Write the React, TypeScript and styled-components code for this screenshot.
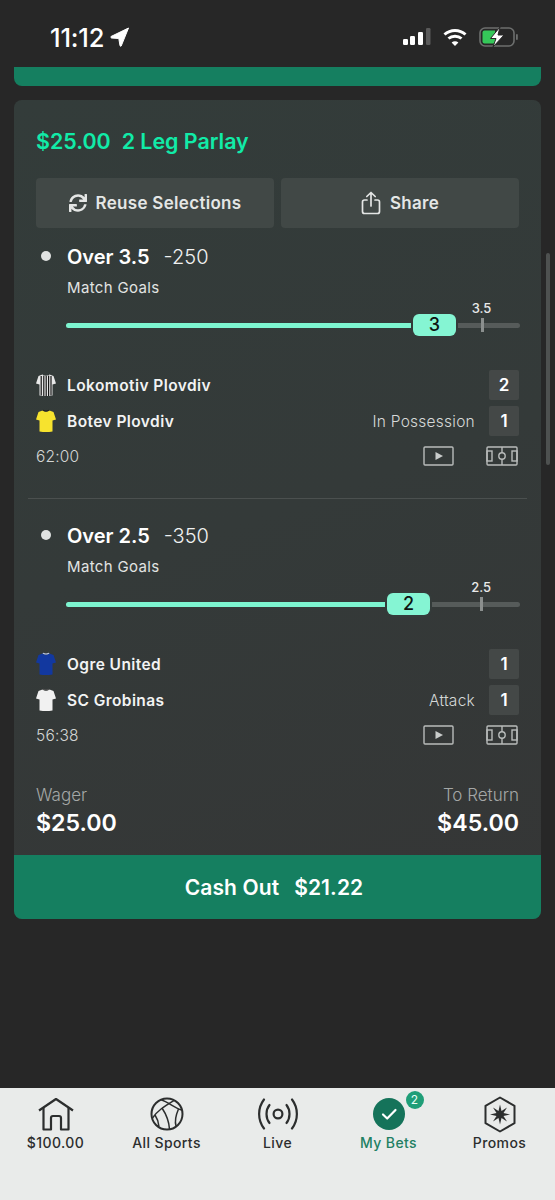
import React from "react";
import styled, { createGlobalStyle } from "styled-components";
import { FaSync } from "react-icons/fa";

const GlobalStyle = createGlobalStyle`
  html, body {
    margin: 0;
    padding: 0;
    background: #272727;
    font-family: "Inter", "Liberation Sans", sans-serif;
  }
`;

const Page = styled.div`
  position: relative;
  width: 555px;
  height: 1200px;
  display: flex;
  flex-direction: column;
  background: #272727;
  color: #fff;
  overflow: hidden;
`;

const StatusBar = styled.div`
  height: 67px;
  flex: none;
  box-sizing: border-box;
  padding: 7px 37px 0 50px;
  display: flex;
  align-items: center;
  justify-content: space-between;
`;

const Clock = styled.div`
  display: flex;
  align-items: center;
  gap: 6px;
  font-size: 25.5px;
  font-weight: 500;
  letter-spacing: -0.2px;
`;

const StatusIcons = styled.div`
  display: flex;
  align-items: center;
  gap: 12px;
`;

const Content = styled.div`
  flex: 1;
  padding: 0 14px;
`;

const PrevCardEdge = styled.div`
  height: 19px;
  background: #157f60;
  border-radius: 0 0 8px 8px;
  margin-bottom: 14px;
`;

const Card = styled.div`
  border-radius: 8px;
  overflow: hidden;
  background: linear-gradient(160deg, #333c3a 0%, #343a39 50%, #353636 100%);
`;

const CardBody = styled.div`
  padding: 28px 22px 17px;
`;

const Title = styled.div`
  height: 26px;
  line-height: 26px;
  font-size: 21.4px;
  font-weight: 600;
  color: #11eba8;
  display: flex;
  gap: 11px;
`;

const Actions = styled.div`
  display: grid;
  grid-template-columns: 1fr 1fr;
  gap: 7px;
  margin-top: 24px;
`;

const ActionButton = styled.div`
  height: 50px;
  border-radius: 4px;
  background: #414846;
  color: #e4e6e5;
  display: flex;
  align-items: center;
  justify-content: center;
  gap: 9px;
  font-size: 17px;
  font-weight: 600;
  letter-spacing: 0.3px;
`;

const Leg = styled.div<{ $first?: boolean }>`
  padding-top: ${(p) => (p.$first ? "16px" : "24px")};
`;

const Pick = styled.div`
  height: 26px;
  display: flex;
  align-items: center;
`;

const Dot = styled.span`
  width: 10px;
  height: 10px;
  border-radius: 50%;
  background: #e0e2e1;
  margin: -2px 16px 0 5px;
`;

const PickName = styled.span`
  font-size: 20px;
  font-weight: 600;
`;

const Odds = styled.span`
  font-size: 20px;
  font-weight: 300;
  margin-left: 14px;
  color: #f0f1f1;
`;

const Market = styled.div`
  height: 20px;
  line-height: 20px;
  margin: 8px 0 0 31px;
  font-size: 15px;
  letter-spacing: 0.35px;
  color: #e2e4e3;
`;

const Slider = styled.div`
  position: relative;
  height: 44px;
  margin: 5px -1px 0 30px;
  display: flex;
  align-items: center;
`;

const Track = styled.div`
  width: 100%;
  height: 5px;
  border-radius: 3px;
  background: #565b5a;
`;

const Fill = styled.div`
  height: 100%;
  border-radius: 3px;
  background: #7df5d0;
`;

const Thumb = styled.div`
  position: absolute;
  top: 11px;
  width: 43px;
  height: 22px;
  border-radius: 6px;
  background: #85f5d3;
  box-shadow: 0 0 0 2px #343b3a;
  color: #0d1412;
  font-size: 18px;
  font-weight: 500;
  line-height: 22px;
  text-align: center;
`;

const Tick = styled.div`
  position: absolute;
  top: 15px;
  width: 3px;
  height: 14px;
  background: #8b8f8e;
`;

const TickLabel = styled.div`
  position: absolute;
  top: -3px;
  width: 40px;
  margin-left: -19px;
  text-align: center;
  font-size: 13px;
  font-weight: 500;
  color: #e8e9e9;
`;

const Teams = styled.div`
  margin-top: 23px;
  display: flex;
  flex-direction: column;
  gap: 6px;
`;

const TeamRow = styled.div`
  height: 30px;
  display: flex;
  align-items: center;
`;

const TeamName = styled.div`
  margin-left: 11px;
  font-size: 15.5px;
  font-weight: 600;
  letter-spacing: 0.42px;
  color: #f2f3f3;
  flex: 1;
`;

const Status = styled.div`
  font-size: 15.5px;
  font-weight: 300;
  letter-spacing: 0.25px;
  color: #d6d8d7;
  margin-right: 14px;
`;

const Score = styled.div`
  width: 30px;
  height: 30px;
  background: #444847;
  border-radius: 2px;
  text-align: center;
  line-height: 30px;
  font-size: 17px;
  font-weight: 600;
`;

const MatchFooter = styled.div`
  height: 24px;
  margin-top: 8px;
  padding-bottom: 1px;
  display: flex;
  align-items: center;
  justify-content: space-between;
`;

const MatchTime = styled.div`
  font-size: 15.5px;
  font-weight: 300;
  letter-spacing: 0.2px;
  color: #d3d5d4;
`;

const MatchIcons = styled.div`
  display: flex;
  align-items: center;
  gap: 32px;
  margin-right: 1px;
`;

const Divider = styled.div`
  height: 1px;
  background: #4b504f;
  margin: 29px -8px 0;
`;

const Totals = styled.div`
  display: flex;
  justify-content: space-between;
  margin-top: 37px;
`;

const TotalColumn = styled.div<{ $right?: boolean }>`
  display: flex;
  flex-direction: column;
  gap: 3px;
  text-align: ${(p) => (p.$right ? "right" : "left")};
`;

const TotalLabel = styled.div`
  height: 20px;
  line-height: 20px;
  font-size: 17px;
  font-weight: 300;
  color: #a4a7a6;
`;

const TotalValue = styled.div`
  height: 30px;
  line-height: 30px;
  font-size: 23.2px;
  font-weight: 600;
`;

const CashOut = styled.div`
  height: 64px;
  box-sizing: border-box;
  padding-right: 7px;
  background: #157f60;
  display: flex;
  align-items: center;
  justify-content: center;
  gap: 15px;
  font-size: 21px;
  font-weight: 600;
  letter-spacing: 0.1px;
`;

const ScrollThumb = styled.div`
  position: absolute;
  left: 546px;
  top: 253px;
  width: 4px;
  height: 212px;
  border-radius: 2px;
  background: #4e5150;
`;

const TabBar = styled.div`
  height: 112px;
  flex: none;
  background: #e9ebea;
  display: grid;
  grid-template-columns: repeat(5, 1fr);
`;

const Tab = styled.div<{ $active?: boolean }>`
  display: flex;
  flex-direction: column;
  align-items: center;
  padding-top: 8px;
  font-size: 14px;
  font-weight: 500;
  letter-spacing: 0.4px;
  color: ${(p) => (p.$active ? "#217f63" : "#2c2e2e")};
`;

const TabIcon = styled.div`
  position: relative;
  width: 40px;
  height: 36px;
  margin-bottom: 2px;
  display: flex;
  align-items: center;
  justify-content: center;
`;

const TabBadge = styled.div`
  position: absolute;
  left: 37px;
  top: -5px;
  width: 18px;
  height: 18px;
  border-radius: 50%;
  background: #1f9e78;
  color: #eafff7;
  font-size: 12px;
  font-weight: 400;
  letter-spacing: 0;
  line-height: 18px;
  text-align: center;
`;

const LocationArrow = () => (
  <svg width="19" height="20" viewBox="0 0 19 20">
    <path d="M18.5 1 L1 9.5 Q0.5 10.6 1.5 11 L8.8 11.5 L10 18.8 Q10.5 19.6 11.2 19 Z" fill="#fff" stroke="#fff" strokeLinejoin="round" />
  </svg>
);

const SignalIcon = () => (
  <svg width="28" height="18" viewBox="0 0 28 18">
    <rect x="0" y="11" width="5" height="6" rx="1.2" fill="#fff" />
    <rect x="7" y="8" width="5" height="9" rx="1.2" fill="#fff" />
    <rect x="15" y="4" width="5" height="13" rx="1.2" fill="#fff" />
    <rect x="23" y="0" width="4.5" height="17" rx="1.2" fill="#5a5a5a" />
  </svg>
);

const WifiIcon = () => (
  <svg width="24" height="19" viewBox="0 0 24 19" fill="none" stroke="#fff" strokeWidth="3">
    <path d="M1.5 6.5 C7.5 1 16.5 1 22.5 6.5" />
    <path d="M5.5 10.5 C9 7.4 15 7.4 18.5 10.5" />
    <path d="M12 18 L8.6 14.4 C10.6 12.8 13.4 12.8 15.4 14.4 Z" fill="#fff" stroke="none" />
  </svg>
);

const BatteryIcon = () => (
  <svg width="39" height="20" viewBox="0 0 39 20">
    <rect x="1" y="1" width="34" height="18" rx="5" fill="none" stroke="#6d6f6e" strokeWidth="1.6" />
    <rect x="37" y="7" width="1.8" height="6" rx="0.9" fill="#6d6f6e" />
    <path d="M5.5 3.5 H16 V16.5 H5.5 Q3.5 16.5 3.5 14.5 V5.5 Q3.5 3.5 5.5 3.5 Z" fill="#35c759" />
    <path d="M21 0 L11.5 11.5 H17 L14 20 L25 8 H19 L21 0 Z" fill="#fff" stroke="#272727" strokeWidth="1" />
  </svg>
);

const ShareIcon = () => (
  <svg width="20" height="24" viewBox="0 0 20 24" fill="none" stroke="#e4e6e5" strokeWidth="1.7" strokeLinecap="round" strokeLinejoin="round">
    <path d="M6 9 H3.5 Q1.5 9 1.5 11 V20.5 Q1.5 22.5 3.5 22.5 H16.5 Q18.5 22.5 18.5 20.5 V11 Q18.5 9 16.5 9 H14" />
    <path d="M10 15 V1.5 M5.8 5.5 L10 1.5 L14.2 5.5" />
  </svg>
);

const Jersey = ({ color, stripes, collar }: { color: string; stripes?: boolean; collar?: string }) => (
  <svg width="20" height="24" viewBox="0 0 20 24">
    <path
      d="M6.5 1.5 C8 3 12 3 13.5 1.5 L17.5 3 L20 10.5 L16.5 11.5 L16.5 22.5 Q10 23.5 3.5 22.5 L3.5 11.5 L0 10.5 L2.5 3 Z"
      fill={color}
    />
    {stripes && (
      <>
        <rect x="4.6" y="3" width="1.2" height="19.5" fill="#151515" />
        <rect x="7.2" y="2.6" width="1.2" height="20.4" fill="#151515" />
        <rect x="9.6" y="2.8" width="1.2" height="20.4" fill="#151515" />
        <rect x="12" y="2.6" width="1.2" height="20.4" fill="#151515" />
        <rect x="14.4" y="3" width="1.2" height="19.5" fill="#151515" />
      </>
    )}
    {collar && <path d="M6.5 1.2 C8 3 12 3 13.5 1.2 L12.8 0.8 C11 1.8 9 1.8 7.2 0.8 Z" fill={collar} />}
  </svg>
);

const VideoIcon = () => (
  <svg width="31" height="20" viewBox="0 0 31 20" fill="none">
    <rect x="1" y="1" width="29" height="18" rx="1" stroke="#b9bcbb" strokeWidth="1.4" />
    <path d="M12.5 6 L20 10 L12.5 14 Z" fill="#c9cccb" />
  </svg>
);

const PitchIcon = () => (
  <svg width="32" height="20" viewBox="0 0 32 20" fill="none" stroke="#b9bcbb" strokeWidth="1.4">
    <rect x="1" y="1" width="30" height="18" rx="1" />
    <path d="M16 1 V19" />
    <circle cx="16" cy="10" r="3.2" fill="#343a39" />
    <rect x="1" y="5" width="5" height="10" />
    <rect x="26" y="5" width="5" height="10" />
  </svg>
);

const HomeIcon = () => (
  <svg width="36" height="34" viewBox="0 0 36 34" fill="none" stroke="#2c2e2e" strokeWidth="2.2" strokeLinejoin="round">
    <path d="M1 13.5 L18 2 L35 13.5" />
    <path d="M5.5 11 V32.5 H13 V21 Q13 19 15 19 H21 Q23 19 23 21 V32.5 H30.5 V11" />
  </svg>
);

const BallIcon = () => (
  <svg width="34" height="34" viewBox="0 0 34 34" fill="none" stroke="#2c2e2e" strokeWidth="1.5">
    <circle cx="17" cy="17" r="15.5" strokeWidth="2" />
    <path d="M2.5 21 C8 13 15 9 24 3.5" />
    <path d="M11 2.8 C18 5 25 11 31.5 13" />
    <path d="M12 11 C16 17 19 25 19.5 32" />
    <path d="M9 29.5 C8.5 25 7 21 5 18" />
    <path d="M26 29 C24.5 24 25.5 19 28.5 12" />
  </svg>
);

const LiveIcon = () => (
  <svg width="40" height="32" viewBox="0 0 40 32" fill="none" stroke="#2c2e2e" strokeWidth="2.2" strokeLinecap="round">
    <circle cx="20" cy="16" r="4.4" />
    <path d="M11.5 7 C7.5 12 7.5 20 11.5 25" />
    <path d="M28.5 7 C32.5 12 32.5 20 28.5 25" />
    <path d="M6 1.5 C-0.5 10 -0.5 22 6 30.5" />
    <path d="M34 1.5 C40.5 10 40.5 22 34 30.5" />
  </svg>
);

const BetsIcon = () => (
  <svg width="32" height="32" viewBox="0 0 32 32" fill="none">
    <circle cx="16" cy="16" r="16" fill="#15735a" />
    <path d="M10 16.5 L14.2 20.5 L22.5 12" stroke="#fff" strokeWidth="2.2" strokeLinecap="round" strokeLinejoin="round" />
  </svg>
);

const PromoIcon = () => (
  <svg width="32" height="37" viewBox="0 0 32 37" fill="none">
    <path d="M16 1.5 L30.5 9.8 V27.2 L16 35.5 L1.5 27.2 V9.8 Z" stroke="#2c2e2e" strokeWidth="2" strokeLinejoin="round" />
    <path
      d="M16 8.5 L17.5 15 L23 11.5 L19.5 17 L26 18.5 L19.5 20 L23 25.5 L17.5 22 L16 28.5 L14.5 22 L9 25.5 L12.5 20 L6 18.5 L12.5 17 L9 11.5 L14.5 15 Z"
      fill="#2c2e2e"
    />
  </svg>
);

interface TeamData {
  name: string;
  score: number;
  status?: string;
  color: string;
  stripes?: boolean;
  collar?: string;
}

interface LegData {
  pick: string;
  odds: string;
  line: string;
  current: number;
  fill: number;
  mark: number;
  time: string;
  teams: TeamData[];
}

const legs: LegData[] = [
  {
    pick: "Over 3.5",
    odds: "-250",
    line: "3.5",
    current: 3,
    fill: 76.4,
    mark: 91.3,
    time: "62:00",
    teams: [
      { name: "Lokomotiv Plovdiv", score: 2, color: "#e8e8e8", stripes: true },
      { name: "Botev Plovdiv", score: 1, status: "In Possession", color: "#f7e32e", collar: "#222" },
    ],
  },
  {
    pick: "Over 2.5",
    odds: "-350",
    line: "2.5",
    current: 2,
    fill: 70.7,
    mark: 91.2,
    time: "56:38",
    teams: [
      { name: "Ogre United", score: 1, color: "#12389f", collar: "#c9d3ee" },
      { name: "SC Grobinas", score: 1, status: "Attack", color: "#f1f1f1", collar: "#555" },
    ],
  },
];

const tabs = [
  { label: "$100.00", icon: <HomeIcon /> },
  { label: "All Sports", icon: <BallIcon /> },
  { label: "Live", icon: <LiveIcon /> },
  { label: "My Bets", icon: <BetsIcon />, active: true, badge: 2 },
  { label: "Promos", icon: <PromoIcon /> },
];

const App: React.FC = () => {
  return (
    <Page>
      <GlobalStyle />
      <StatusBar>
        <Clock>
          11:12
          <LocationArrow />
        </Clock>
        <StatusIcons>
          <SignalIcon />
          <WifiIcon />
          <BatteryIcon />
        </StatusIcons>
      </StatusBar>

      <Content>
        <PrevCardEdge />
        <Card>
          <CardBody>
            <Title>
              <span>$25.00</span>
              <span>2 Leg Parlay</span>
            </Title>
            <Actions>
              <ActionButton>
                <FaSync size={18} color="#e4e6e5" />
                Reuse Selections
              </ActionButton>
              <ActionButton>
                <ShareIcon />
                Share
              </ActionButton>
            </Actions>

            {legs.map((leg, i) => (
              <React.Fragment key={leg.pick}>
                {i > 0 && <Divider />}
                <Leg $first={i === 0}>
                  <Pick>
                    <Dot />
                    <PickName>{leg.pick}</PickName>
                    <Odds>{leg.odds}</Odds>
                  </Pick>
                  <Market>Match Goals</Market>
                  <Slider>
                    <Track>
                      <Fill style={{ width: `${leg.fill}%` }} />
                    </Track>
                    <Thumb style={{ left: `${leg.fill}%` }}>{leg.current}</Thumb>
                    <Tick style={{ left: `${leg.mark}%` }} />
                    <TickLabel style={{ left: `${leg.mark}%` }}>{leg.line}</TickLabel>
                  </Slider>
                  <Teams>
                    {leg.teams.map((team) => (
                      <TeamRow key={team.name}>
                        <Jersey color={team.color} stripes={team.stripes} collar={team.collar} />
                        <TeamName>{team.name}</TeamName>
                        {team.status && <Status>{team.status}</Status>}
                        <Score>{team.score}</Score>
                      </TeamRow>
                    ))}
                  </Teams>
                  <MatchFooter>
                    <MatchTime>{leg.time}</MatchTime>
                    <MatchIcons>
                      <VideoIcon />
                      <PitchIcon />
                    </MatchIcons>
                  </MatchFooter>
                </Leg>
              </React.Fragment>
            ))}

            <Totals>
              <TotalColumn>
                <TotalLabel>Wager</TotalLabel>
                <TotalValue>$25.00</TotalValue>
              </TotalColumn>
              <TotalColumn $right>
                <TotalLabel>To Return</TotalLabel>
                <TotalValue>$45.00</TotalValue>
              </TotalColumn>
            </Totals>
          </CardBody>
          <CashOut>
            <span>Cash Out</span>
            <span>$21.22</span>
          </CashOut>
        </Card>
      </Content>

      <ScrollThumb />

      <TabBar>
        {tabs.map((tab) => (
          <Tab key={tab.label} $active={tab.active}>
            <TabIcon>
              {tab.icon}
              {tab.badge && <TabBadge>{tab.badge}</TabBadge>}
            </TabIcon>
            {tab.label}
          </Tab>
        ))}
      </TabBar>
    </Page>
  );
};

export default App;
